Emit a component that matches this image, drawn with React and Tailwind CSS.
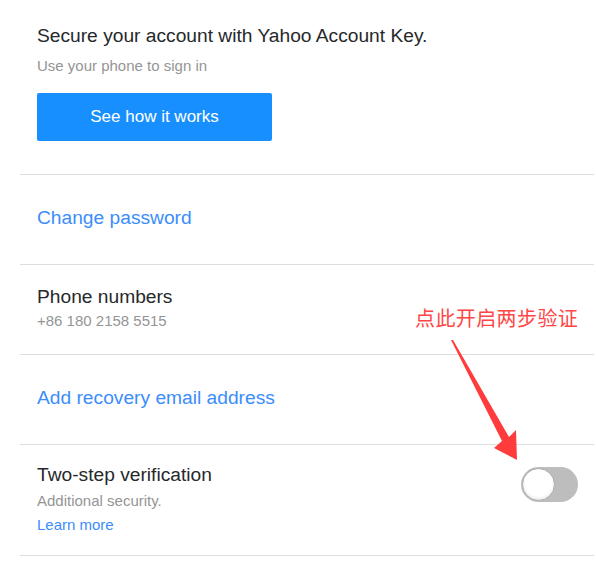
import React from "react";

function Toggle() {
  return (
    <div className="mt-[3px] mr-[16px] w-[57px] h-[35px] rounded-full bg-[#bdbdbd] flex items-center px-[1px]">
      <div className="w-[33px] h-[33px] rounded-full bg-white border border-[#a9a9a9] shadow-[inset_0_-2px_3px_rgba(0,0,0,0.08)]" />
    </div>
  );
}

export default function App() {
  return (
    <main
      className="relative w-[596px] h-[571px] bg-white overflow-hidden"
      style={{ fontFamily: '"Liberation Sans", Arial, sans-serif' }}
    >
      <div className="ml-[20px] mr-[2px]">
        <section className="pl-[17px] pt-[25px] pb-[33px] border-b border-[#dedede]">
          <h2 className="text-[19.2px] leading-[22px] text-[#26282a]">
            Secure your account with Yahoo Account Key.
          </h2>
          <p className="mt-[10px] text-[15px] leading-[18px] text-[#959595]">
            Use your phone to sign in
          </p>
          <button className="mt-[18px] w-[235px] h-[48px] rounded-[2px] bg-[#188fff] text-white text-[17px]">
            See how it works
          </button>
        </section>

        <section className="pl-[17px] pt-[32px] pb-[35px] border-b border-[#dedede]">
          <a className="block text-[19.2px] leading-[22px] text-[#3b8dfc]">Change password</a>
        </section>

        <section className="pl-[17px] pt-[21px] pb-[24px] border-b border-[#dedede]">
          <h3 className="text-[19.2px] leading-[22px] text-[#26282a]">Phone numbers</h3>
          <p className="mt-[4px] text-[15px] leading-[18px] text-[#959595]">+86 180 2158 5515</p>
        </section>

        <section className="pl-[17px] pt-[32px] pb-[35px] border-b border-[#dedede]">
          <a className="block text-[19.2px] leading-[22px] text-[#3b8dfc]">Add recovery email address</a>
        </section>

        <section className="pl-[17px] pt-[19px] pb-[21px] border-b border-[#dedede] flex justify-between items-start">
          <div>
            <h3 className="text-[19.2px] leading-[22px] text-[#26282a]">Two-step verification</h3>
            <p className="mt-[6px] text-[15px] leading-[18px] text-[#959595]">Additional security.</p>
            <a className="block mt-[6px] text-[15px] leading-[18px] text-[#3b8dfc]">Learn more</a>
          </div>
          <Toggle />
        </section>
      </div>

      <div
        className="absolute left-[415px] top-[306px] text-[20px] leading-[24px] tracking-[0.4px] text-[#ff4545] whitespace-nowrap"
        style={{ fontFamily: '"Noto Sans CJK SC", sans-serif' }}
      >
        点此开启两步验证
      </div>

      <svg className="absolute left-0 top-0 pointer-events-none" width="596" height="571">
        <polygon
          points="451,340 453,340 509,437 516,430 517,460 494,448 502,441"
          fill="#ff3b3b"
        />
      </svg>
    </main>
  );
}
